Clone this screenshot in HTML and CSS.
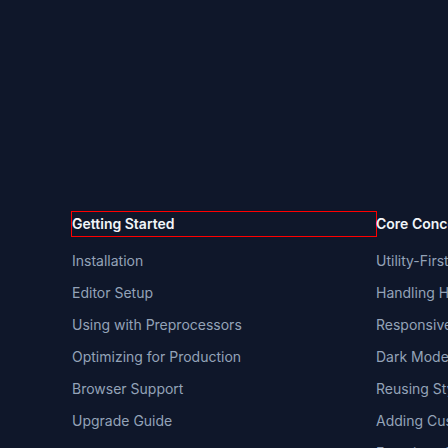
FILE: index.html
```html
<!DOCTYPE html>
<html lang="en">
<head>
<meta charset="utf-8">
<title>Docs navigation</title>
<link rel="stylesheet" href="styles.css">
</head>
<body>
<nav class="docs-nav">
  <section class="nav-group">
    <h3 class="nav-title nav-title--outlined">Getting Started</h3>
    <ul class="nav-list">
      <li class="nav-item">Installation</li>
      <li class="nav-item">Editor Setup</li>
      <li class="nav-item">Using with Preprocessors</li>
      <li class="nav-item">Optimizing for Production</li>
      <li class="nav-item">Browser Support</li>
      <li class="nav-item">Upgrade Guide</li>
    </ul>
  </section>
  <section class="nav-group">
    <h3 class="nav-title">Core Concepts</h3>
    <ul class="nav-list">
      <li class="nav-item">Utility-First Fundamentals</li>
      <li class="nav-item">Handling Hover, Focus, and Other States</li>
      <li class="nav-item">Responsive Design</li>
      <li class="nav-item">Dark Mode</li>
      <li class="nav-item">Reusing Styles</li>
      <li class="nav-item">Adding Custom Styles</li>
      <li class="nav-item">Functions &amp; Directives</li>
    </ul>
  </section>
</nav>
</body>
</html>
```
FILE: styles.css
```css
html, body {
  margin: 0;
  padding: 0;
  height: 100%;
  overflow: hidden;
  background: #0f172a;
}

body {
  font-family: Inter, "Noto Sans", sans-serif;
  font-size: 14px;
}

.docs-nav {
  display: grid;
  grid-template-columns: repeat(2, 304px);
  padding: 212px 0 0 72px;
  width: max-content;
}

.nav-group {
  min-width: 0;
}

.nav-title {
  margin: 0;
  font-size: 14px;
  line-height: 24px;
  font-weight: 600;
  color: #f1f5f9;
  white-space: nowrap;
}

.nav-title--outlined {
  outline: 1px solid #ff0000;
}

.nav-list {
  list-style: none;
  margin: 15px 0 0;
  padding: 0;
  display: flex;
  flex-direction: column;
  gap: 12px;
}

.nav-item {
  line-height: 20px;
  color: #94a3b8;
  white-space: nowrap;
}
```
